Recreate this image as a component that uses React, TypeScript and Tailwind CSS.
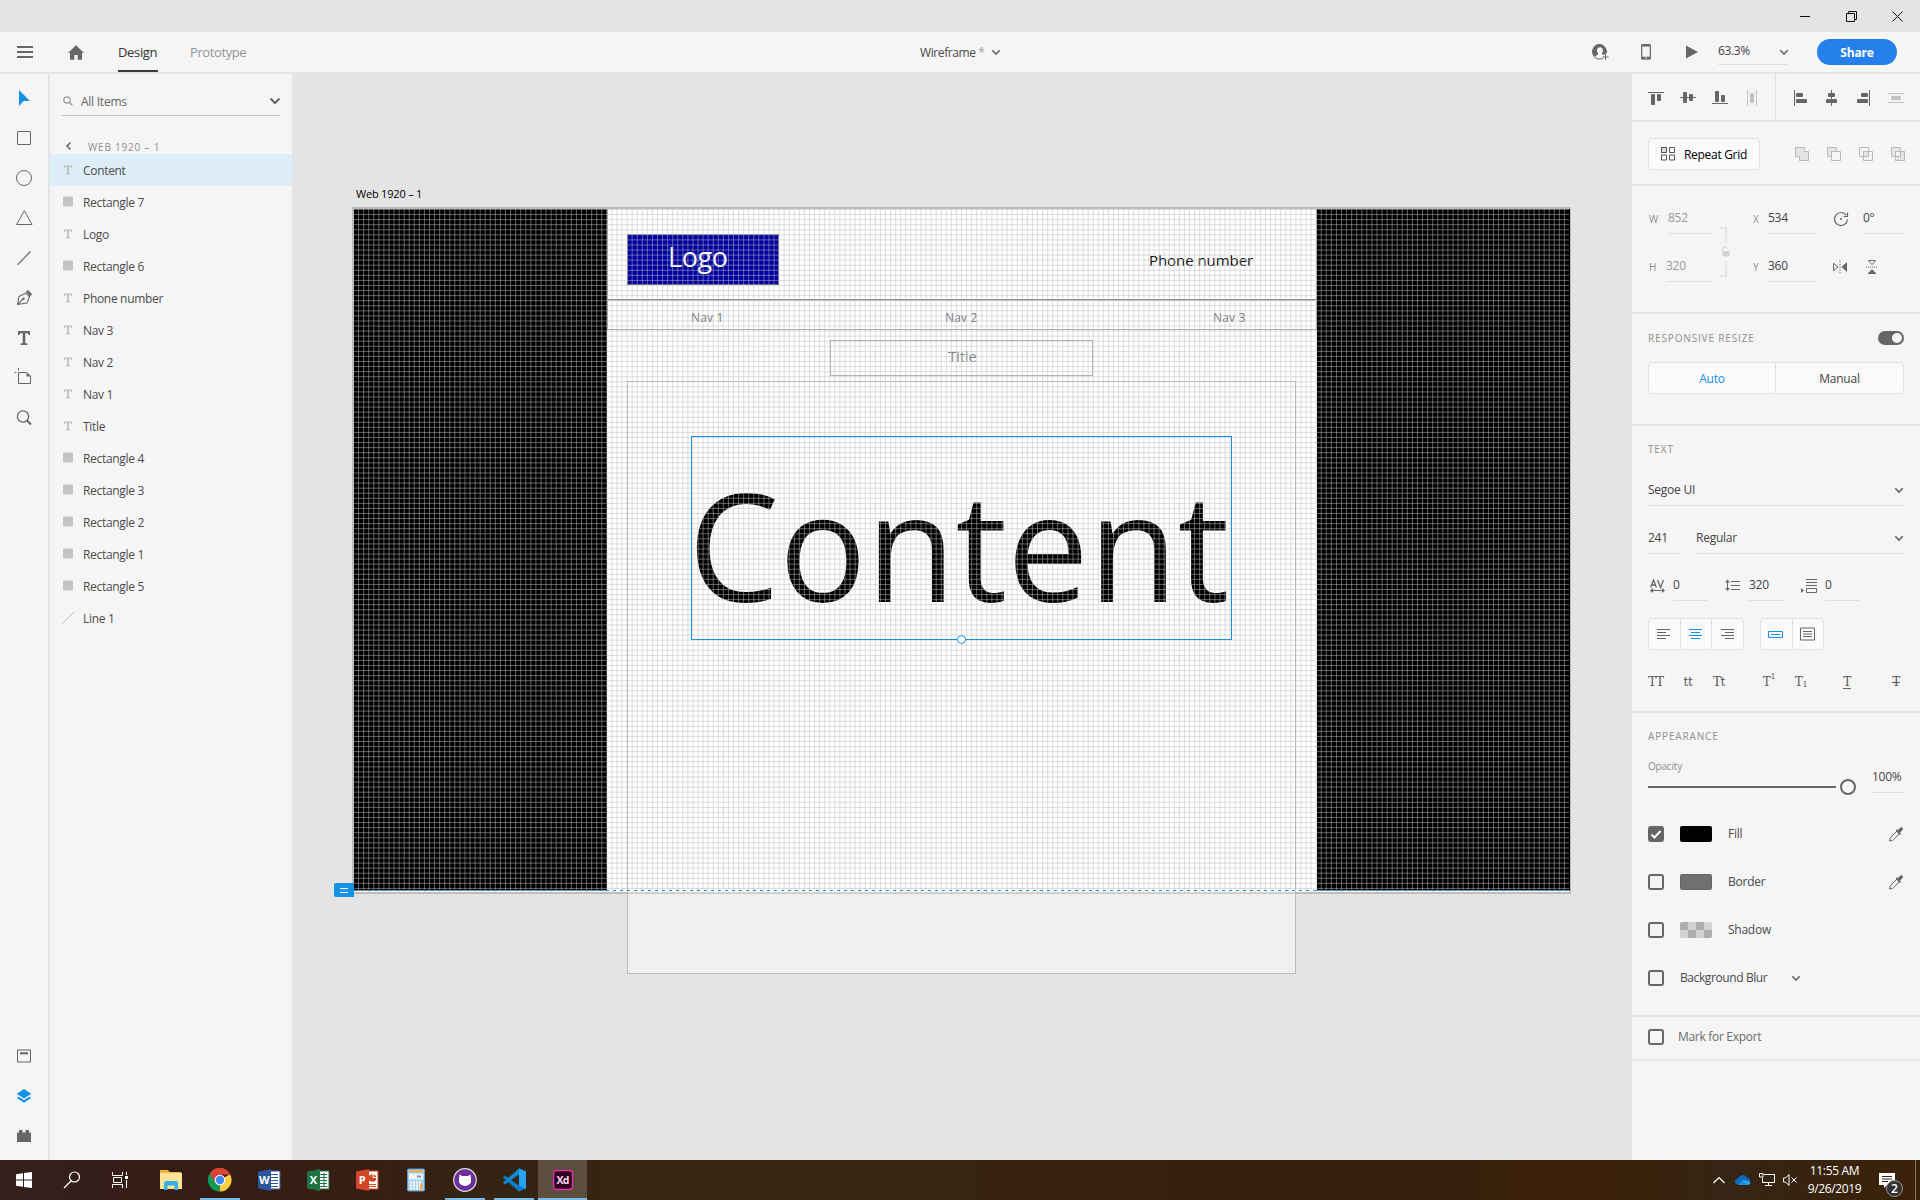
import React from "react";

type IconProps = { w: number; h?: number; c?: string; children: React.ReactNode };
function Icon({ w, h, c = "", children }: IconProps) {
  return (
    <svg width={w} height={h ?? w} viewBox={`0 0 ${w} ${h ?? w}`} fill="none" className={`shrink-0 ${c}`}>
      {children}
    </svg>
  );
}

function Chevron({ big = false }: { big?: boolean }) {
  return big ? (
    <Icon w={12} h={8}>
      <path d="M1.5 1.5 6 6l4.500-4.500" stroke="#666" strokeWidth="2" />
    </Icon>
  ) : (
    <Icon w={10} h={7}>
      <path d="M1.300 1.300 5 5l3.700-3.700" stroke="#666" strokeWidth="1.600" />
    </Icon>
  );
}

const tools: React.ReactNode[] = [
  <Icon w={20}><path d="M5 2v16l4.500-5H16z" fill="#1592e6" /></Icon>,
  <Icon w={20}><rect x="3.500" y="3.500" width="13" height="13" stroke="#666" rx=".5" /></Icon>,
  <Icon w={20}><circle cx="10" cy="10" r="7.500" stroke="#666" /></Icon>,
  <Icon w={20}><path d="M10.300 2.700 18 16.500H2.600z" stroke="#666" strokeLinejoin="round" /></Icon>,
  <Icon w={20}><path d="M3.500 16.800 16.500 3.500" stroke="#666" strokeWidth="1.200" /></Icon>,
  <Icon w={20}>
    <path d="M3.500 16.500 5 8.500l7-3.500 3.500 3.500-2.500 6.500z M3.500 16.500 9 11" stroke="#666" strokeWidth="1.100" strokeLinejoin="round" />
    <circle cx="9.500" cy="10.800" r="1.200" fill="#666" />
    <path d="m12 3.500 2-1.500 4 4-1.500 2.500z" fill="#666" />
  </Icon>,
  <Icon w={20}><path d="M4 3h12v4h-1.500l-.7-1.800h-2.500v10h2V17H6.700v-1.800h2v-10H6.200L5.500 7H4z" fill="#666" /></Icon>,
  <Icon w={20}>
    <path d="M4.500 4.500H13l3.500 3.500v7.500h-12zM.5 4.500h2M4.500 0v2.500" stroke="#666" />
    <path d="M12.500 4.500v4h4z" fill="#666" />
  </Icon>,
  <Icon w={20}>
    <circle cx="9" cy="8.500" r="5.600" stroke="#666" strokeWidth="1.300" />
    <path d="m13 12.500 4 4" stroke="#666" strokeWidth="2" />
  </Icon>,
];

const bottomTools: React.ReactNode[] = [
  <Icon w={20}>
    <rect x="3.500" y="4" width="13" height="12" stroke="#666" />
    <path d="M6 7.300h8" stroke="#666" strokeWidth="2" />
  </Icon>,
  <Icon w={20}>
    <path d="m10 3 7.300 4.800L10 12.500 2.700 7.800z" fill="#1592e6" />
    <path d="m2.700 12 2-1.200L10 14l5.300-3.200 2 1.200-7.300 4.700z" fill="#1592e6" />
  </Icon>,
  <Icon w={20}>
    <path d="M5 4h3.500v2.500h3V4H15v2.500h1.200q.8 0 .8.800V16H3V7.300q0-.8.8-.8H5z" fill="#666" />
  </Icon>,
];

const layers: [string, "T" | "R" | "L"][] = [
  ["Content", "T"],
  ["Rectangle 7", "R"],
  ["Logo", "T"],
  ["Rectangle 6", "R"],
  ["Phone number", "T"],
  ["Nav 3", "T"],
  ["Nav 2", "T"],
  ["Nav 1", "T"],
  ["Title", "T"],
  ["Rectangle 4", "R"],
  ["Rectangle 3", "R"],
  ["Rectangle 2", "R"],
  ["Rectangle 1", "R"],
  ["Rectangle 5", "R"],
  ["Line 1", "L"],
];

function LayerIcon({ kind }: { kind: "T" | "R" | "L" }) {
  return (
    <Icon w={12}>
      {kind === "T" && <path d="M2 1.500h8v2.700H9L8.500 3H7v6.200h1.200v1.300H3.800V9.200H5V3H3.500L3 4.200H2z" fill="#c3c3c3" />}
      {kind === "R" && <rect x="1" y="0.500" width="10" height="10" rx="1" fill="#c3c3c3" />}
      {kind === "L" && <path d="M.2 11.800 11.800.2" stroke="#bbb" />}
    </Icon>
  );
}

function TopBar() {
  return (
    <>
      <div className="flex h-8 shrink-0 items-center justify-end bg-[#e4e4e4]">
        <div className="flex w-[46px] justify-center"><Icon w={10}><path d="M0 5.500h10" stroke="#111" /></Icon></div>
        <div className="flex w-[46px] justify-center">
          <Icon w={11}><path d="M.5 2.500h8v8h-8zM2.500 2.500v-2h8v8h-2" stroke="#111" /></Icon>
        </div>
        <div className="flex w-[46px] justify-center"><Icon w={11}><path d="M.5.500l10 10M10.500.500l-10 10" stroke="#111" /></Icon></div>
      </div>
      <header className="flex h-[42px] shrink-0 items-stretch border-b-2 border-[#e4e4e4] bg-[#f5f5f5]">
        <div className="flex w-[50px] items-center justify-center">
          <Icon w={16} h={12}><path d="M0 1h16M0 6h16M0 11h16" stroke="#666" strokeWidth="2" /></Icon>
        </div>
        <div className="flex w-[52px] items-center justify-center">
          <Icon w={16} h={15}><path d="M8 .3 16 8h-2v6.700H9.700V10H6.300v4.700H2V8H0z" fill="#666" /></Icon>
        </div>
        <div className="ml-4 flex w-10 items-center border-b-2 border-[#3b3b3b] text-[13px] leading-none text-[#333]">
          <span className="pt-[2px] tracking-[-0.350px]">Design</span>
        </div>
        <div className="ml-[32px] flex w-[730px] items-center text-[13px] leading-none text-[#959595]">
          <span className="pt-px tracking-[-0.400px]">Prototype</span>
        </div>
        <div className="flex items-center gap-[6px] pt-px text-[12px] text-[#4b4b4b]">
          <span className="tracking-[-0.400px]">Wireframe <span className="text-[#999]">*</span></span>
          <Chevron />
        </div>
        <div className="ml-auto flex items-center">
          <div className="flex w-[46px] justify-center">
            <Icon w={17} h={16}>
              <path d="M11 14.300a7 7 0 1 1 3.500-5" stroke="#666" strokeWidth="1" />
              <path d="M3 12.500A7 7 0 1 1 14 9l-2 2-2-.7V9.200c1.500-1.700 1.300-6-2-6s-3.800 4-2 6v1.300z" fill="#666" />
              <path d="M13.500 10v6M10.500 13h6" stroke="#666" />
            </Icon>
          </div>
          <div className="flex w-[46px] justify-center">
            <Icon w={10} h={16}>
              <rect x=".7" y="1" width="8.600" height="14" rx="1" stroke="#666" strokeWidth="1.200" />
              <path d="M.5 1.300h9M.5 14h9" stroke="#666" strokeWidth="2.500" />
              <circle cx="5" cy="14" r=".8" fill="#f5f5f5" />
            </Icon>
          </div>
          <div className="flex w-[46px] justify-center"><Icon w={12} h={14}><path d="M0 .5 12 7 0 13.500z" fill="#666" /></Icon></div>
          <div className="mt-[1px] ml-[3px] flex h-[25px] w-[70px] items-start justify-between border-b border-[#e0e0e0] text-[12px] leading-[22px] text-[#444]">
            <span className="tracking-[-0.350px]">63.3%</span>
            <div className="-mr-[1px] pt-[9px]"><Chevron /></div>
          </div>
          <div className="mr-[23px] ml-[29px] flex h-[26px] w-20 items-center justify-center rounded-full bg-[#2680eb] pt-px text-[12px] font-bold tracking-[-0.200px] text-white">
            Share
          </div>
        </div>
      </header>
    </>
  );
}

function LeftPanel() {
  return (
    <>
      <nav className="flex w-[50px] shrink-0 flex-col border-r-2 border-[#e4e4e4] bg-[#f5f5f5] pt-1 pb-1">
        {tools.map((t, i) => (
          <div key={i} className="flex h-10 items-center justify-center">{t}</div>
        ))}
        <div className="mt-auto">
          {bottomTools.map((t, i) => (
            <div key={i} className="flex h-10 items-center justify-center">{t}</div>
          ))}
        </div>
      </nav>
      <aside className="flex w-[242px] shrink-0 flex-col bg-[#f5f5f5]">
        <div className="mx-3 mt-[13px] flex h-[29px] items-center border-b border-[#bfbfbf] text-[12px] text-[#666]">
          <div className="ml-[1px] flex w-[18px]">
            <Icon w={10}><circle cx="4" cy="4" r="3.200" stroke="#999" strokeWidth="1.200" /><path d="m6.300 6.300 3 3" stroke="#999" strokeWidth="1.500" /></Icon>
          </div>
          <span className="pt-px tracking-[-0.250px]">All Items</span>
          <div className="-mr-px ml-auto"><Chevron big /></div>
        </div>
        <div className="mt-[21px] flex h-[17px] items-center pl-[15px] text-[10px] text-[#8e8e8e]">
          <Icon w={8} h={10}><path d="M5.500 1.500 2 5l3.500 3.500" stroke="#666" strokeWidth="1.600" /></Icon>
          <span className="ml-[15px] pt-[2px] leading-none tracking-[0.800px]">WEB 1920 – 1</span>
        </div>
        {layers.map(([name, kind], i) => (
          <div
            key={name}
            className={`flex h-8 items-center gap-[9px] pl-3 text-[12px] text-[#4b4b4b] ${i === 0 ? "bg-[#deeef9]" : ""}`}
          >
            <LayerIcon kind={kind} />
            <span className="pt-[2px] tracking-[-0.320px]">{name}</span>
          </div>
        ))}
      </aside>
    </>
  );
}

const GRID = 5.0667;
const verticals = Array.from({ length: 240 }, (_, i) => `M${(i * GRID + 0.5).toFixed(2)} 0V685`).join("");
const horizontals = Array.from({ length: 136 }, (_, i) => `M0 ${(i * GRID + 0.5).toFixed(2)}H1216`).join("");

function Canvas() {
  return (
    <main className="relative grow overflow-hidden bg-[#e4e4e4]">
      <span className="absolute top-[112px] left-[64px] text-[11px] leading-4 tracking-[-0.200px] text-black">Web 1920 – 1</span>
      <div className="absolute top-[133px] left-[60px] h-[687px] w-[1219px] border-2 border-[#bcbcbc] bg-white" />
      <div className="absolute top-[135px] left-[62px] h-[681px] w-[253px] bg-black" />
      <div className="absolute top-[135px] left-[1025px] h-[681px] w-[253px] bg-black" />
      <div className="absolute top-[135px] left-[315px] h-[91px] w-[710px] border border-t-0 border-[#a8a8a8] border-b-[#8c8c8c]" />
      <div className="absolute top-[226px] left-[315px] h-[30px] w-[710px] border border-[#a8a8a8] border-t-[#cacaca]" />
      <div className="absolute top-[160px] left-[335px] h-[51px] w-[152px] border border-[#707090] bg-[#0000a0]" />
      <span className="absolute top-[165px] left-[376px] text-[27px] leading-9 tracking-[-0.400px] text-white">Logo</span>
      <span className="absolute top-[176px] left-[857px] text-[15px] leading-5 tracking-[-0.050px] text-black">Phone number</span>
      <span className="absolute top-[236px] left-[399px] text-[12px] leading-4 tracking-[0.200px] text-[#707070]">Nav 1</span>
      <span className="absolute top-[236px] left-[653px] text-[12px] leading-4 tracking-[0.200px] text-[#707070]">Nav 2</span>
      <span className="absolute top-[236px] left-[921px] text-[12px] leading-4 tracking-[0.200px] text-[#707070]">Nav 3</span>
      <div className="absolute top-[266px] left-[538px] h-[36px] w-[263px] border border-[#b0b0b0]" />
      <span className="absolute top-[272px] left-[656px] text-[15px] leading-5 tracking-[-0.200px] text-[#808080]">Title</span>
      <div className="absolute top-[307px] left-[335px] h-[593px] w-[669px] border border-[#b9b9b9] bg-white/45" />
      <span className="absolute top-[370px] left-[396px] origin-left scale-x-[0.967] text-[150px] leading-[200px] whitespace-nowrap text-black">Content</span>
      <svg width="1216" height="685" viewBox="0 0 1216 685" className="absolute top-[135px] left-[61px]">
        <path d={verticals + horizontals} stroke="#bdbdbd" strokeOpacity="0.500" fill="none" />
      </svg>
      <div className="absolute top-[362px] left-[399px] h-[204px] w-[541px] border border-[#1e8fe1]" />
      <div className="absolute top-[561px] left-[665px] size-[9px] rounded-full border border-[#1e8fe1] bg-white" />
      <svg width="1217" height="1" className="absolute top-[816px] left-[62px]">
        <path d="M0 .5H1217" stroke="#8c8c8c" />
        <path d="M253 .5H962" stroke="#fff" />
        <path d="M0 .5H1217" stroke="#1592e6" strokeDasharray="3 4" />
      </svg>
      <div className="absolute top-[809px] left-[42px] flex h-[14px] w-5 items-center justify-center rounded-l-xs bg-[#1592e6]">
        <Icon w={8} h={5}><path d="M0 .5h8M0 4.500h8" stroke="#fff" /></Icon>
      </div>
    </main>
  );
}

function Heading({ children }: { children: React.ReactNode }) {
  return <span className="text-[10px] leading-[14px] tracking-[0.850px] text-[#8e8e8e]">{children}</span>;
}

function Field({ value, className }: { value: string; className: string }) {
  return <div className={`h-[25px] shrink-0 border-b border-[#e0e0e0] text-[12px] leading-[18px] tracking-[-0.250px] ${className}`}>{value}</div>;
}

function AlignRow() {
  const slot = "flex w-8 justify-center";
  return (
    <div className="flex h-12 shrink-0 border-b-2 border-[#e4e4e4]">
      <div className="flex w-[144px] items-center border-r border-[#e0e0e0] pt-[2px] pl-2">
        <div className={slot}><Icon w={16}><path d="M0 2.500h16" stroke="#666" /><rect x="3" y="4" width="4" height="11" rx="1" fill="#666" /><rect x="9" y="4" width="4" height="7" rx="1" fill="#666" /></Icon></div>
        <div className={slot}><Icon w={16}><path d="M0 7.500h16" stroke="#666" /><rect x="3" y="2" width="4" height="11" rx="1" fill="#666" /><rect x="9" y="4" width="4" height="7" rx="1" fill="#666" /></Icon></div>
        <div className={slot}><Icon w={16}><path d="M0 13.500h16" stroke="#666" /><rect x="3" y="1" width="4" height="11" rx="1" fill="#666" /><rect x="9" y="5" width="4" height="7" rx="1" fill="#666" /></Icon></div>
        <div className={slot}><Icon w={16}><path d="M3.500 0v16M12.500 0v16" stroke="#c4c4c4" /><rect x="6" y="3" width="4" height="10" rx="1" fill="#c4c4c4" /></Icon></div>
      </div>
      <div className="flex items-center pt-[2px] pl-[8px]">
        <div className={slot}><Icon w={16}><path d="M2.500 0v16" stroke="#666" /><rect x="4" y="3" width="7" height="4" rx="1" fill="#666" /><rect x="4" y="9" width="11" height="4" rx="1" fill="#666" /></Icon></div>
        <div className={slot}><Icon w={16}><path d="M7.500 0v16" stroke="#666" /><rect x="4" y="3" width="7" height="4" rx="1" fill="#666" /><rect x="2" y="9" width="11" height="4" rx="1" fill="#666" /></Icon></div>
        <div className={slot}><Icon w={16}><path d="M13.500 0v16" stroke="#666" /><rect x="5" y="3" width="7" height="4" rx="1" fill="#666" /><rect x="1" y="9" width="11" height="4" rx="1" fill="#666" /></Icon></div>
        <div className={slot}><Icon w={16}><path d="M0 3.500h16M0 12.500h16" stroke="#c4c4c4" /><rect x="3" y="6" width="10" height="4" rx="1" fill="#c4c4c4" /></Icon></div>
      </div>
    </div>
  );
}

function RepeatRow() {
  return (
    <div className="flex h-16 shrink-0 items-center border-b-2 border-[#e4e4e4] pt-[2px] pl-4">
      <button className="flex h-8 w-[112px] items-center rounded-[4px] border border-[#e1e1e1] bg-[#fafafa] pl-3 text-[12px] tracking-[-0.300px] text-black">
        <Icon w={14} c="mr-[9px]">
          <rect x=".5" y=".5" width="5" height="5" fill="#ddd" stroke="#555" />
          <path d="M8.500.500h5v5h-5zM.5 8h5v5h-5zM8.500 8h5v5h-5z" stroke="#555" />
        </Icon>
        <span className="pt-px">Repeat Grid</span>
      </button>
      <div className="ml-[35px] flex gap-[18px]">
        <Icon w={14}><path d="M.5.500h9v4h4v9h-9v-4h-4z" fill="#e4e4e4" stroke="#b8b8b8" /></Icon>
        <Icon w={14}><path d="M.5.500h9v4h-5v5h-4z" fill="#e4e4e4" stroke="#b8b8b8" /><path d="M4.500 4.500h9v9h-9z" stroke="#b8b8b8" /></Icon>
        <Icon w={14}><path d="M4.500 4.500h5v5h-5z" fill="#e4e4e4" /><path d="M.5.500h9v9h-9zM4.500 4.500h9v9h-9z" stroke="#b8b8b8" /></Icon>
        <Icon w={14}><path d="M.5.500h9v9h-9zM4.500 4.500h9v9h-9z" fill="#e4e4e4" stroke="#b8b8b8" /><path d="M4.500 4.500h5v5h-5z" fill="#f5f5f5" stroke="#b8b8b8" /></Icon>
      </div>
    </div>
  );
}

function TransformSection() {
  const tag = "shrink-0 pt-[2px] text-[10px] leading-4 text-[#8e8e8e]";
  return (
    <div className="flex h-[128px] shrink-0 border-b-2 border-[#e4e4e4] pt-[23px] pl-[17px]">
      <div className="flex w-[63px] flex-col gap-[23px]">
        <div className="flex"><span className={`w-[19px] ${tag}`}>W</span><Field value="852" className="w-[44px] text-[#999]" /></div>
        <div className="flex"><span className={`w-[17px] ${tag}`}>H</span><Field value="320" className="w-[46px] text-[#999]" /></div>
      </div>
      <div className="w-[41px] pt-[18px] pl-[7px]">
        <Icon w={12} h={50}>
          <path d="M0 .5h7v16M7 33.500v16H0" stroke="#dedede" strokeWidth="1.300" />
          <path d="M4 24V21.500q0-1.500 1.500-1.500T8 21.500" stroke="#d4d4d4" strokeWidth="1.200" />
          <rect x="3.500" y="24" width="7" height="5.500" rx=".5" fill="#d4d4d4" />
        </Icon>
      </div>
      <div className="flex w-[63px] flex-col gap-[23px]">
        <div className="flex"><span className={`w-[15px] ${tag}`}>X</span><Field value="534" className="w-[48px] text-[#444]" /></div>
        <div className="flex"><span className={`w-[15px] ${tag}`}>Y</span><Field value="360" className="w-[48px] text-[#444]" /></div>
      </div>
      <div className="ml-[17px] flex flex-col">
        <div className="flex h-12">
          <div className="w-[30px] pt-[2px]">
            <Icon w={16}>
              <path d="M13.300 4.200A6.500 6.500 0 1 0 14.500 8.500" stroke="#666" strokeWidth="1.200" />
              <path d="M14.500 1.500v4h-4" stroke="#666" strokeWidth="1.200" />
              <circle cx="8" cy="8" r="1" fill="#666" />
            </Icon>
          </div>
          <Field value="0°" className="w-[41px] text-[#444]" />
        </div>
        <div className="flex gap-[18px] pt-[3px]">
          <Icon w={14}>
            <path d="M.6 3.300v7.400L5 7z" stroke="#666" /><path d="M14 2v10L8.500 7z" fill="#666" />
            <path d="M7 0v14" stroke="#666" strokeDasharray="1 1" />
          </Icon>
          <Icon w={14}>
            <path d="M3.300.600h7.400L7 4.500z" stroke="#666" /><path d="M2.500 14h9L7 9z" fill="#666" />
            <path d="M1 7h12" stroke="#666" strokeDasharray="1 1" />
          </Icon>
        </div>
      </div>
    </div>
  );
}

function ResponsiveSection() {
  return (
    <div className="flex h-[112px] shrink-0 flex-col border-b-2 border-[#e4e4e4] px-4 pt-[17px]">
      <div className="flex h-[14px] items-center justify-between">
        <Heading>RESPONSIVE RESIZE</Heading>
        <div className="flex h-[14px] w-[26px] items-center justify-end rounded-full bg-[#666] pr-[2px]">
          <div className="size-[10px] rounded-full bg-[#f8f8f8]" />
        </div>
      </div>
      <div className="mt-[17px] flex h-8 overflow-hidden rounded-[4px] border border-[#e1e1e1] bg-[#fafafa] text-[12px] tracking-[-0.250px]">
        <div className="flex w-1/2 items-center justify-center border-r border-[#e1e1e1] pt-[2px] text-[#1592e6]">Auto</div>
        <div className="flex w-1/2 items-center justify-center pt-[2px] text-[#444]">Manual</div>
      </div>
    </div>
  );
}

function SegIcon({ kind, active = false, last = false }: { kind: string; active?: boolean; last?: boolean }) {
  const c = active ? "#1592e6" : "#666";
  return (
    <div className={`flex h-full flex-1 items-center justify-center ${last ? "" : "border-r border-[#e1e1e1]"}`}>
      <Icon w={16} h={14} c="-mt-px">
        {kind === "l" && <path d="M1 2.500h13M1 5.500h9M1 8.500h13M1 11.500h9" stroke={c} />}
        {kind === "c" && <path d="M1 2.500h13M3 5.500h9M1 8.500h13M3 11.500h9" stroke={c} />}
        {kind === "r" && <path d="M1 2.500h13M5 5.500h9M1 8.500h13M5 11.500h9" stroke={c} />}
        {kind === "p" && <path d="M.5 4.500h14v6H.500zM3 7.500h9" stroke={c} />}
        {kind === "a" && <path d="M.5 1h14v12H.500zM3 4.500h9M3 7h9M3 9.500h9" stroke={c} />}
      </Icon>
    </div>
  );
}

function TextSection() {
  const glyph = "flex shrink-0 justify-center font-['DejaVu_Serif'] text-[12px] leading-4 tracking-[-0.300px] text-[#555]";
  return (
    <div className="flex h-[287px] shrink-0 flex-col border-b-2 border-[#e4e4e4] px-4 pt-[16px]">
      <Heading>TEXT</Heading>
      <div className="mt-[25px] flex h-[25px] justify-between border-b border-[#e0e0e0] text-[12px] leading-[18px] tracking-[-0.250px] text-[#444]">
        Segoe UI<div className="pt-[6px]"><Chevron /></div>
      </div>
      <div className="mt-[23px] flex gap-4 text-[12px] leading-[18px] tracking-[-0.250px] text-[#444]">
        <div className="h-[25px] w-8 border-b border-[#e0e0e0]">241</div>
        <div className="flex h-[25px] grow justify-between border-b border-[#e0e0e0]">Regular<div className="pt-[6px]"><Chevron /></div></div>
      </div>
      <div className="mt-[22px] flex text-[#444]">
        <div className="w-[25px] pt-[3px] pl-[2px]">
          <Icon w={15} h={14}>
            <path d="m.5 8.500 3-7.500 3 7.500M1.500 6h4M7.500 1l3 7.500 3-7.500" stroke="#666" strokeWidth="1.300" />
            <path d="M1.500 11.500h12" stroke="#666" /><path d="M0 11.500 3 9v5zM15 11.500 12 9v5z" fill="#666" />
          </Icon>
        </div>
        <Field value="0" className="w-[35px]" />
        <div className="ml-[17px] w-[24px] pt-[3px]">
          <Icon w={15} h={13}>
            <path d="M2.500 2v8M6 2.500h9M6 6.500h9M6 10.500h9" stroke="#666" />
            <path d="M0 3.500 2.500.500 5 3.500zM0 9l2.500 3L5 9z" fill="#666" />
          </Icon>
        </div>
        <Field value="320" className="w-[35px]" />
        <div className="ml-[17px] w-[24px] pt-[3px]">
          <Icon w={16} h={14}>
            <path d="M5 .5h11M5 3.500h11M5 6.500h11M5.500 9.500h10v4h-10z" stroke="#666" />
            <path d="M0 9v5l3-2.500z" fill="#666" />
          </Icon>
        </div>
        <Field value="0" className="w-[35px]" />
      </div>
      <div className="mt-[17px] flex gap-4">
        <div className="flex h-8 w-24 items-center rounded-[4px] border border-[#e1e1e1] bg-[#fafafa]">
          <SegIcon kind="l" /><SegIcon kind="c" active /><SegIcon kind="r" last />
        </div>
        <div className="flex h-8 w-16 items-center rounded-[4px] border border-[#e1e1e1] bg-[#fafafa]">
          <SegIcon kind="p" active /><SegIcon kind="a" last />
        </div>
      </div>
      <div className="mt-[24px] flex">
        <span className={`w-[16px] ${glyph}`}>TT</span>
        <span className={`ml-[16px] w-[16px] ${glyph}`}>tt</span>
        <span className={`ml-[15px] w-[16px] ${glyph}`}>Tt</span>
        <span className={`ml-[35px] w-[14px] ${glyph}`}>T<span className="-mt-[5px] text-[8px]">1</span></span>
        <span className={`ml-[18px] w-[14px] ${glyph}`}>T<span className="mt-[3px] text-[8px]">1</span></span>
        <span className={`ml-[34px] w-[10px] ${glyph}`}><span className="h-[15px] border-b border-[#666]">T</span></span>
        <span className={`ml-[39px] w-[10px] ${glyph}`}><span className="line-through">T</span></span>
      </div>
    </div>
  );
}

function Check({ on = false }: { on?: boolean }) {
  return (
    <Icon w={16}>
      <rect x="1" y="1" width="14" height="14" rx="2" stroke="#666" strokeWidth="2" fill={on ? "#666" : "none"} />
      {on && <path d="m3.500 8.500 3 3 6-6.500" stroke="#fff" strokeWidth="2" />}
    </Icon>
  );
}

function Dropper() {
  return (
    <Icon w={16} c="ml-auto">
      <path d="m9 5 2.500 2.500-6 6.300q-1 .8-2.300.900l-1.700.300.500-2q.3-1 1-1.800z" stroke="#666" />
      <path d="m7.500 4.500 1.300-1.200 1 1L12 1.800q1.300-1 2.400 0t0 2.400L12 6.700l1 1-1.200 1.300z" fill="#666" />
    </Icon>
  );
}

function AppearanceSection() {
  const row = "flex h-12 shrink-0 items-center text-[12px] tracking-[-0.250px] text-[#4b4b4b]";
  return (
    <div className="flex h-[304px] shrink-0 flex-col border-b-2 border-[#e4e4e4] px-4 pt-[16px]">
      <Heading>APPEARANCE</Heading>
      <div className="mt-[13px] flex h-[53px]">
        <div className="w-[208px]">
          <div className="mt-[3px] text-[10px] leading-[14px] tracking-[-0.200px] text-[#8e8e8e]">Opacity</div>
          <div className="mt-[6px] flex h-4 items-center gap-1">
            <div className="h-[2px] w-[188px] shrink-0 bg-[#666]" />
            <div className="size-4 shrink-0 rounded-full border-2 border-[#666] bg-[#f8f8f8]" />
          </div>
        </div>
        <div className="mt-[12px] ml-4"><Field value="100%" className="w-8 text-[#444]" /></div>
      </div>
      <div className={`mt-[1px] ${row}`}><Check on /><div className="mr-4 ml-4 h-4 w-8 rounded-[2px] bg-black" />Fill<Dropper /></div>
      <div className={row}><Check /><div className="mr-4 ml-4 h-4 w-8 rounded-[2px] border border-[#666] bg-[#707070]" />Border<Dropper /></div>
      <div className={row}>
        <Check />
        <div className="mr-4 ml-4 grid h-4 w-8 grid-cols-4 overflow-hidden rounded-[2px]">
          {[0, 1, 0, 1, 1, 0, 1, 0].map((v, i) => (
            <div key={i} className={v ? "bg-[#d2d2d2]" : "bg-[#adadad]"} />
          ))}
        </div>
        Shadow
      </div>
      <div className={row}><Check /><span className="ml-4 w-[111px] tracking-[-0.400px]">Background Blur</span><Chevron /></div>
    </div>
  );
}

function RightPanel() {
  return (
    <aside className="flex w-[288px] shrink-0 flex-col bg-[#f5f5f5]">
      <AlignRow />
      <RepeatRow />
      <TransformSection />
      <ResponsiveSection />
      <TextSection />
      <AppearanceSection />
      <div className="flex h-11 shrink-0 items-center gap-[14px] border-b-2 border-[#e4e4e4] pb-[2px] pl-4 text-[12px] tracking-[-0.300px] text-[#6b6b6b]">
        <Check />Mark for Export
      </div>
    </aside>
  );
}

function OfficeIcon({ color, letter, children }: { color: string; letter: string; children: React.ReactNode }) {
  return (
    <Icon w={24}>
      <rect x="12" y="3" width="11" height="18" fill="#fff" stroke={color} />
      {children}
      <path d="M1 3.500 14 1v22L1 20.500z" fill={color} />
      <text x="7.300" y="16" fontSize="11" fontWeight="700" fontFamily="Open Sans" fill="#fff" textAnchor="middle">{letter}</text>
    </Icon>
  );
}

const apps: { icon: React.ReactNode; running?: boolean; active?: boolean }[] = [
  {
    icon: (
      <Icon w={24}>
        <path d="M1 2h8l1.500 2H22v17H1z" fill="#e8b53c" /><path d="M1 5h22v16H1z" fill="#fde396" />
        <path d="M5 22v-7q0-2 2-2h10q2 0 2 2v7h-3.500v-4.500h-7V22z" fill="#35b0e6" />
      </Icon>
    ),
  },
  {
    icon: (
      <Icon w={24}>
        <path d="M12 12 2 5.500A11.500 11.500 0 0 1 22 6.300L12 6.500z" fill="#db4437" />
        <path d="M12 12 22 6.300A11.500 11.500 0 0 1 11.500 23.500z" fill="#ffcd40" />
        <path d="M12 12 11.500 23.500A11.500 11.500 0 0 1 2 5.500z" fill="#0f9d58" />
        <path d="M12 6.500h10.100A11.500 11.500 0 0 0 2 5.500l5 9z" fill="#db4437" />
        <circle cx="12" cy="12" r="5.300" fill="#fff" /><circle cx="12" cy="12" r="4.200" fill="#4285f4" />
      </Icon>
    ),
    running: true,
  },
  { icon: <OfficeIcon color="#2b579a" letter="W"><path d="M14 6.500h7M14 9.500h7M14 12.500h7M14 15.500h7M14 18.500h7" stroke="#2b579a" /></OfficeIcon> },
  { icon: <OfficeIcon color="#217346" letter="X"><path d="M14 6.500h7M14 9.500h7M14 12.500h7M14 15.500h7M14 18.500h7M18 5v14" stroke="#217346" /></OfficeIcon> },
  { icon: <OfficeIcon color="#d24726" letter="P"><path d="M14 16.500h7M14 18.500h7" stroke="#d24726" /><circle cx="17.500" cy="10" r="3.800" fill="#d24726" /><path d="M18 5.500v4h4" stroke="#fff" /></OfficeIcon> },
  {
    icon: (
      <Icon w={24}>
        <rect x="3.500" y="1" width="17" height="22" rx="1" fill="#a9cfea" stroke="#5f98c0" />
        <rect x="5" y="2.500" width="14" height="2" fill="#f2a94a" /><rect x="5" y="5.500" width="14" height="6" fill="#e9f5fc" />
        <path d="M6 14.500h12M6 17.500h12M6 20.500h12" stroke="#fff" strokeWidth="2" strokeDasharray="2 1" /><rect x="16" y="16.500" width="2.500" height="5" fill="#f2a94a" />
        <path d="M13 8.500h4" stroke="#5f98c0" strokeWidth="2" />
      </Icon>
    ),
  },
  {
    icon: (
      <Icon w={24}>
        <circle cx="12" cy="12" r="11.300" fill="#6c2f9c" stroke="#ddd" strokeWidth="1.200" />
        <path d="M6.500 6.500 9 8h6l2.500-1.500.5 4q1 7-6 7.500-7-.5-6-7.500z" fill="#fff" />
      </Icon>
    ),
    running: true,
  },
  {
    icon: (
      <Icon w={24}>
        <path d="M17 .5 24 3.500v17L17 23.500 1 9.500 3 7.500l14 10z" fill="#0b7dc6" />
        <path d="M17 .5v17L24 21V3.500z" fill="#27a4f0" />
        <path d="M17 .5 1 14.500 3 16.500 17 6.500z" fill="#1089d6" /><path d="m17 7-6.500 5 6.500 5z" fill="#35281a" />
      </Icon>
    ),
    running: true,
  },
  {
    icon: (
      <Icon w={24}>
        <rect x="2.600" y="2.600" width="18.800" height="18.800" rx="3" fill="#2e001e" stroke="#ff2bc2" strokeWidth="1.200" />
        <text x="11.700" y="15.600" fontSize="10.500" fontWeight="700" fontFamily="Open Sans" letterSpacing="-.6" fill="#ffd9f2" textAnchor="middle">Xd</text>
      </Icon>
    ),
    running: true,
    active: true,
  },
];

function Taskbar() {
  return (
    <footer className="flex h-10 shrink-0 items-stretch bg-[linear-gradient(90deg,#35201d_0%,#351c14_12%,#381d12_18%,#352313_24%,#372613_40%,#372310_52%,#361e0f_66%,#3b2109_84%,#352514_90%,#3b2108_100%)]">
      <div className="flex w-12 items-center justify-center">
        <Icon w={16}><path d="M0 2.200 7 1.200V7.500H0zM8 1 16 0v7.500H8zM0 8.500h7v6.300L0 13.800zM8 8.500h8V16l-8-1z" fill="#fff" /></Icon>
      </div>
      <div className="flex w-12 items-center justify-center">
        <Icon w={18}><circle cx="11.500" cy="6" r="5" stroke="#fff" strokeWidth="1.200" /><path d="M8 10 1 17" stroke="#fff" strokeWidth="1.200" /></Icon>
      </div>
      <div className="flex w-12 items-center justify-center">
        <Icon w={17} h={16}>
          <path d="M.5 0v3.500h10V0M.5 16v-3.500h10V16M1.500 5.500h8v5h-8zM14.500 0v3M14.500 8v8" stroke="#fff" /><rect x="13" y="4" width="3" height="3" fill="#fff" />
        </Icon>
      </div>
      <div className="ml-[2px] flex">
        {apps.map((a, i) => (
          <div key={i} className={`flex w-[49px] flex-col items-center ${a.active ? "bg-[#5d4d3d]" : ""}`}>
            <div className="flex h-[38px] items-center pt-[2px]">{a.icon}</div>
            {a.running && <div className={a.active ? "h-[2px] w-full bg-[#76b9ed]" : "h-[2px] w-10 bg-[#76b9ed]"} />}
          </div>
        ))}
      </div>
      <div className="ml-auto flex items-center">
        <div className="flex w-6 justify-center"><Icon w={12} h={8}><path d="m.5 7 5.500-5.500L11.500 7" stroke="#fff" strokeWidth="1.200" /></Icon></div>
        <div className="flex w-6 justify-center">
          <Icon w={16} h={12}>
            <path d="M3 10.500a3 3 0 0 1 0-6 5 5 0 0 1 9-1 3.700 3.700 0 0 1 1 7z" fill="#1068bf" />
            <path d="M4.500 11 8 6l7 1.500q1 3-2 3.500z" fill="#28a8ea" /><path d="M3 11 8 6l4 5z" fill="#1c90dc" />
          </Icon>
        </div>
        <div className="flex w-6 justify-center">
          <Icon w={16} h={14}><path d="M5 1.500h10.500v8H3.500V5M.5.500H4v3.500H.500zM9.500 9.500v3M6 12.500h7" stroke="#fff" /></Icon>
        </div>
        <div className="flex w-[22px] justify-center">
          <Icon w={14} h={12}><path d="M.5 4v4h2L6 11.500V.5L2.500 4zM8.500 3.500l5 5M13.500 3.500l-5 5" stroke="#fff" /></Icon>
        </div>
        <div className="flex w-[67px] flex-col items-center text-[12px] leading-[18px] tracking-[-0.350px] whitespace-nowrap text-white">
          <span>11:55 AM</span>
          <span>9/26/2019</span>
        </div>
        <div className="relative ml-[11px] w-[36px]">
          <Icon w={16} h={16}><path d="M0 1h16v12H8l-3 3v-3H0z" fill="#fff" /><path d="M3 4.500h10M3 7h10M3 9.500h6" stroke="#352514" /></Icon>
          <div className="absolute top-[8px] left-[7px] flex size-[17px] items-center justify-center rounded-full border border-[#999] bg-[#333] text-[12px] leading-none font-semibold text-white">2</div>
        </div>
        <div className="mr-1 h-10 w-px bg-[#85786a]" />
      </div>
    </footer>
  );
}

export default function App() {
  return (
    <div className="flex h-[1200px] w-[1920px] flex-col overflow-hidden bg-[#e4e4e4] font-['Open_Sans','Noto_Sans',sans-serif]">
      <TopBar />
      <div className="flex min-h-0 grow">
        <LeftPanel />
        <Canvas />
        <RightPanel />
      </div>
      <Taskbar />
    </div>
  );
}
